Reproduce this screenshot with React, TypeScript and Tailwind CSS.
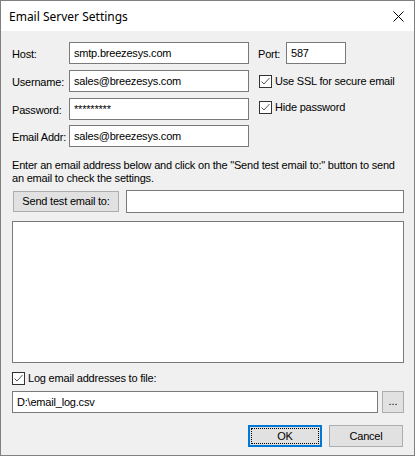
import React from "react";

const font = { fontFamily: '"Liberation Sans", Arial, sans-serif' };

function CheckBox() {
  return (
    <span className="flex h-[13px] w-[13px] shrink-0 items-center justify-center border border-[#333333] bg-white">
      <svg width="11" height="11" viewBox="0 0 11 11">
        <path d="M1.5 5.5 L4 8 L9.5 2" fill="none" stroke="#555555" strokeWidth="1" />
      </svg>
    </span>
  );
}

function TextBox({ value, className }: { value: string; className: string }) {
  return (
    <div
      className={`flex items-center border border-[#7a7a7a] bg-white pl-[4px] text-black ${className}`}
    >
      {value}
    </div>
  );
}

export default function App() {
  const rows = [
    { label: "Host:", value: "smtp.breezesys.com", mt: "mt-0" },
    { label: "Username:", value: "sales@breezesys.com", mt: "mt-[6px]" },
    { label: "Password:", value: "*********", mt: "mt-[6px]" },
    { label: "Email Addr:", value: "sales@breezesys.com", mt: "mt-[5px]" },
  ];

  return (
    <div
      className="flex h-[456px] w-[415px] flex-col border border-[#808080] bg-[#f0f0f0] text-[11px] leading-[13px] tracking-[-0.2px] text-black"
      style={font}
    >
      {/* title bar */}
      <div className="flex h-[30px] shrink-0 items-center justify-between bg-white pl-[8px] pr-[10px]">
        <span
          className="text-[12px] tracking-normal"
          style={{ fontFamily: '"Noto Sans", "Open Sans", sans-serif' }}
        >
          Email Server Settings
        </span>
        <svg width="11" height="11" viewBox="0 0 11 11">
          <path d="M0.5 0.5 L10.5 10.5 M10.5 0.5 L0.5 10.5" stroke="#000" strokeWidth="1" />
        </svg>
      </div>

      <div className="flex flex-1 flex-col pl-[11px] pr-[10px] pt-[11px]">
        <div className="flex">
          <div className="flex flex-col">
            {rows.map((r) => (
              <div key={r.label} className={`flex h-[22px] items-center ${r.mt}`}>
                <span className="w-[57px] pt-[2px]">{r.label}</span>
                <TextBox value={r.value} className="h-[22px] w-[180px]" />
              </div>
            ))}
          </div>
          <div className="ml-[9px] flex flex-col">
            <div className="flex h-[22px] items-center">
              <span className="w-[28px] pt-[2px]">Port:</span>
              <TextBox value="587" className="h-[22px] w-[60px]" />
            </div>
            <div className="mt-[6px] flex h-[22px] items-center gap-[3px] pl-[1px]">
              <CheckBox />
              <span>Use SSL for secure email</span>
            </div>
            <div className="mt-[4px] flex h-[22px] items-center gap-[3px] pl-[1px]">
              <CheckBox />
              <span>Hide password</span>
            </div>
          </div>
        </div>

        <p className="mt-[12px]">
          Enter an email address below and click on the "Send test email to:" button to send
          an email to check the settings.
        </p>

        <div className="mt-[5px] flex h-[23px] items-center">
          <button className="ml-[1px] flex h-[21px] w-[106px] items-center justify-center border border-[#adadad] bg-[#e1e1e1]">
            Send test email to:
          </button>
          <div className="ml-[7px] h-[23px] flex-1 border border-[#7a7a7a] bg-white" />
        </div>

        <div className="mt-[8px] h-[142px] border border-[#7a7a7a] bg-white" />

        <div className="mt-[8px] flex h-[15px] items-center gap-[3px]">
          <CheckBox />
          <span>Log email addresses to file:</span>
        </div>

        <div className="mt-[5px] flex h-[22px] items-center">
          <TextBox value="D:\email_log.csv" className="h-[22px] w-[366px]" />
          <button className="ml-[4px] flex h-[22px] w-[22px] items-end justify-center border border-[#adadad] bg-[#e1e1e1] pb-[4px] tracking-normal">
            ...
          </button>
        </div>

        <div className="mt-[12px] flex justify-end gap-[7px] pr-[1px]">
          <button className="flex h-[22px] w-[74px] items-center justify-center border-2 border-[#0078d7] bg-[#e1e1e1] p-[1px]">
            <span className="flex h-full w-full items-center justify-center border border-dotted border-black">
              OK
            </span>
          </button>
          <button className="flex h-[22px] w-[74px] items-center justify-center border border-[#adadad] bg-[#e1e1e1]">
            Cancel
          </button>
        </div>
      </div>
    </div>
  );
}
